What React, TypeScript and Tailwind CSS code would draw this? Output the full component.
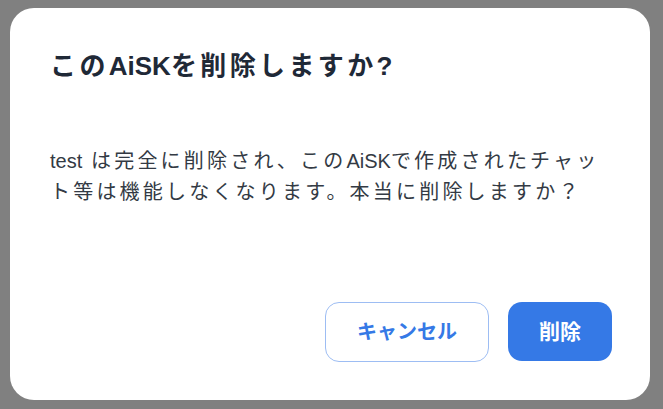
const font = {
    fontFamily: '"Liberation Sans", "Noto Sans CJK JP", sans-serif',
};

const DeleteDialog = () => {
    return (
        <div
            className="flex flex-col w-[640px] h-[392px] bg-white rounded-[24px] pl-[40px] pr-[38px] pt-[40px] pb-[38px]"
            style={font}
        >
            <h2 className="text-[26px] leading-[36px] font-bold tracking-[0.13em] text-[#1f2937]">
                この<span className="tracking-normal">AiSK</span>を削除しますか?
            </h2>
            <p className="mt-[62px] text-[20px] leading-[31px] tracking-[0.16em] text-[#333a44]">
                <span className="tracking-normal">test</span> は完全に削除され、この
                <span className="tracking-normal">AiSK</span>で作成されたチャッ
                <br />
                ト等は機能しなくなります。本当に削除しますか？
            </p>
            <div className="mt-auto flex justify-end gap-[19px]">
                <button className="h-[60px] px-[31px] rounded-[14px] border border-[#9dbdf3] bg-white text-[20px] font-bold text-[#3579e6]">
                    キャンセル
                </button>
                <button className="h-[59px] px-[31px] rounded-[14px] bg-[#3579e6] text-[21px] font-bold text-white">
                    削除
                </button>
            </div>
        </div>
    );
};

export default function App() {
    return (
        <div className="w-[663px] h-[409px] bg-[#808080] pt-[8px] pl-[10px]">
            <DeleteDialog />
        </div>
    );
}
